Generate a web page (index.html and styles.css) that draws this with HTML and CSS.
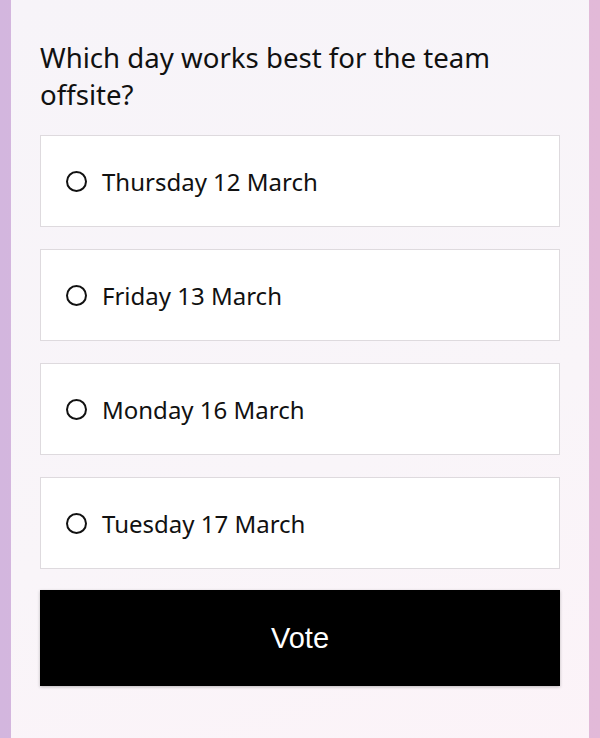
FILE: index.html
```html
<!DOCTYPE html>
<html lang="en">
<head>
    <meta charset="UTF-8">
    <meta name="viewport" content="width=device-width, initial-scale=1.0">
    <title>Poll</title>
    <link rel="stylesheet" href="styles.css">
</head>
<body>
    <div class="card">
        <h1 class="question">Which day works best for the team offsite?</h1>

        <div class="options">
            <label class="option">
                <span class="radio"></span>
                <span class="label">Thursday 12 March</span>
            </label>
            <label class="option">
                <span class="radio"></span>
                <span class="label">Friday 13 March</span>
            </label>
            <label class="option">
                <span class="radio"></span>
                <span class="label">Monday 16 March</span>
            </label>
            <label class="option">
                <span class="radio"></span>
                <span class="label">Tuesday 17 March</span>
            </label>
        </div>

        <button class="vote">Vote</button>
    </div>
</body>
</html>
```

FILE: styles.css
```css
body {
    margin: 0;
    height: 738px;
    overflow: hidden;
    background: linear-gradient(90deg, #d3b6de 0%, #dcb8dc 50%, #e2b9d8 100%);
    font-family: "Noto Sans", "Open Sans", sans-serif;
}

.card {
    margin: 0 11px;
    min-height: 760px;
    padding: 39px 29px 0;
    background: linear-gradient(160deg, #f7f4f9 0%, #f9f5f9 60%, #fcf3f8 100%);
    box-sizing: border-box;
}

.question {
    margin: 0 0 22px;
    font-size: 27.6px;
    font-weight: 400;
    line-height: 37px;
    color: #111;
}

.options {
    display: flex;
    flex-direction: column;
    gap: 22px;
}

.option {
    display: flex;
    align-items: center;
    height: 92px;
    padding: 0 25px;
    background: #fff;
    border: 1px solid #dedade;
    box-sizing: border-box;
    cursor: pointer;
}

.radio {
    width: 21px;
    height: 21px;
    border: 2px solid #111;
    border-radius: 50%;
    box-sizing: border-box;
    margin-right: 15px;
    flex-shrink: 0;
}

.label {
    font-size: 24px;
    color: #111;
}

.vote {
    display: block;
    width: 100%;
    height: 96px;
    margin-top: 21px;
    border: none;
    background: #000;
    color: #fff;
    font-family: "Liberation Sans", Arial, sans-serif;
    font-size: 29px;
    cursor: pointer;
    box-shadow: 0 1px 3px rgba(0, 0, 0, 0.25);
}
```
